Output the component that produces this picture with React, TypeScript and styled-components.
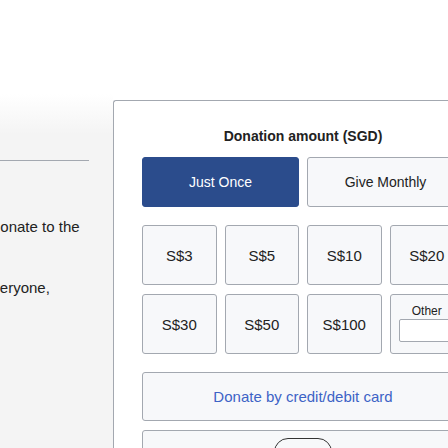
import React from "react";
import styled, { createGlobalStyle } from "styled-components";

const Global = createGlobalStyle`
  html, body { margin: 0; padding: 0; background: #fff; overflow: hidden; }
  body { font-family: "Liberation Sans", Arial, sans-serif; color: #222; }
  * { box-sizing: border-box; }
`;

const Page = styled.div`
  width: 448px;
  height: 448px;
  overflow: hidden;
  display: flex;
  flex-direction: column;
`;

const TopSpace = styled.div`
  height: 100px;
  flex: none;
`;

const Main = styled.div`
  display: flex;
  flex: 1;
  width: 600px;
`;

const Sidebar = styled.div`
  width: 113px;
  flex: none;
  overflow: hidden;
  padding-top: 60px;
  background: linear-gradient(#ffffff 0px, #f4f4f4 40px, #f4f4f4 100%);
  margin-top: -6px;
  padding-top: 66px;
`;

const Divider = styled.div`
  width: 89px;
  height: 1px;
  background: #a3a8b0;
`;

const SideText = styled.p<{ $shift: number; $top: number }>`
  margin: ${(p) => p.$top}px 0 0 ${(p) => -p.$shift}px;
  font-size: 15px;
  line-height: 20px;
  color: #222;
  white-space: nowrap;
`;

const Card = styled.div`
  width: 379px;
  flex: none;
  background: #fff;
  border-top: 1px solid #a3a8b0;
  border-left: 1px solid #a3a8b0;
  border-top-left-radius: 3px;
  padding: 25px 28px 0 28px;
  display: flex;
  flex-direction: column;
`;

const Title = styled.h2`
  margin: 0;
  font-size: 14px;
  line-height: 20px;
  font-weight: bold;
  text-align: center;
  color: #222;
`;

const Tabs = styled.div`
  display: flex;
  gap: 8px;
  margin-top: 11px;
`;

const Tab = styled.button<{ $active?: boolean }>`
  flex: 1;
  height: 50px;
  border-radius: 3px;
  border: 1px solid ${(p) => (p.$active ? "#2b4c8c" : "#a3a8b0")};
  background: ${(p) => (p.$active ? "#2b4c8c" : "#f7f8fa")};
  color: ${(p) => (p.$active ? "#fff" : "#222")};
  font-family: "Liberation Sans", Arial, sans-serif;
  font-size: 14px;
  padding: 0;
`;

const Grid = styled.div`
  display: grid;
  grid-template-columns: repeat(4, 1fr);
  grid-auto-rows: 60px;
  column-gap: 8px;
  row-gap: 9px;
  margin-top: 18px;
`;

const Amount = styled.button`
  border: 1px solid #a3a8b0;
  border-radius: 3px;
  background: #f7f8fa;
  color: #222;
  font-family: "Liberation Sans", Arial, sans-serif;
  font-size: 15px;
  padding: 0;
`;

const OtherBox = styled.div`
  border: 1px solid #a3a8b0;
  border-radius: 3px;
  background: #f7f8fa;
  display: flex;
  flex-direction: column;
  align-items: stretch;
  padding: 9px 8px 0 8px;
`;

const OtherLabel = styled.label`
  font-size: 12px;
  line-height: 14px;
  text-align: center;
  color: #222;
`;

const OtherInput = styled.input`
  margin-top: 1px;
  height: 23px;
  border: 1px solid #a3a8b0;
  border-radius: 2px;
  background: #fff;
  width: 100%;
`;

const DonateButton = styled.button`
  margin-top: 18px;
  height: 49px;
  border: 1px solid #a3a8b0;
  border-radius: 3px;
  background: #f7f8fa;
  color: #3d63c6;
  font-family: "Liberation Sans", Arial, sans-serif;
  font-size: 15px;
  padding: 0;
`;

const AltBox = styled.div`
  margin-top: 9px;
  height: 60px;
  border: 1px solid #a3a8b0;
  border-radius: 3px;
  background: #f7f8fa;
  display: flex;
  justify-content: center;
  padding-top: 7px;
`;

const Pill = styled.div`
  width: 58px;
  height: 32px;
  border: 1.5px solid #333;
  border-radius: 14px;
  background: #f7f8fa;
`;

export default function App() {
  const amounts = ["S$3", "S$5", "S$10", "S$20", "S$30", "S$50", "S$100"];
  return (
    <Page>
      <Global />
      <TopSpace />
      <Main>
        <Sidebar>
          <Divider />
          <SideText $shift={8} $top={56}>donate to the</SideText>
          <SideText $shift={16} $top={41}>everyone,</SideText>
        </Sidebar>
        <Card>
          <Title>Donation amount (SGD)</Title>
          <Tabs>
            <Tab $active>Just Once</Tab>
            <Tab>Give Monthly</Tab>
          </Tabs>
          <Grid>
            {amounts.map((a) => (
              <Amount key={a}>{a}</Amount>
            ))}
            <OtherBox>
              <OtherLabel>Other</OtherLabel>
              <OtherInput type="text" />
            </OtherBox>
          </Grid>
          <DonateButton>Donate by credit/debit card</DonateButton>
          <AltBox>
            <Pill />
          </AltBox>
        </Card>
      </Main>
    </Page>
  );
}
